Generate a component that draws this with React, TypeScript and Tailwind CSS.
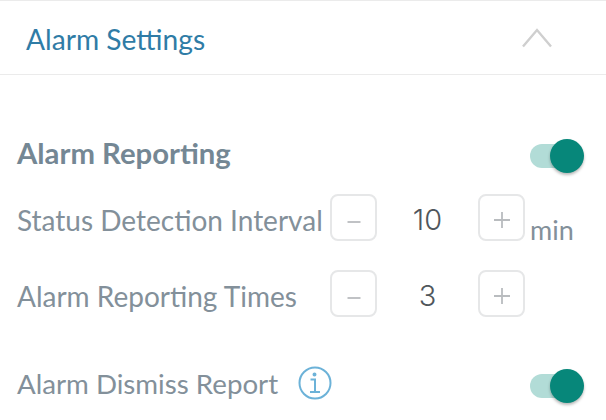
function Toggle() {
  return (
    <div className="relative mr-[8px] h-[24px] w-[50px] rounded-full bg-[#b2dcd7]">
      <div className="absolute -top-[5px] left-[20px] h-[34px] w-[34px] rounded-full bg-[#07877a] shadow-[0_2px_3px_rgba(0,0,0,0.28)]" />
    </div>
  );
}

function StepButton({ kind }: { kind: "minus" | "plus" }) {
  return (
    <div className="flex h-[47px] w-[47px] shrink-0 items-center justify-center rounded-[8px] border-2 border-[#e6e7e8]">
      <svg width="18" height="22" viewBox="0 0 18 22" fill="none" stroke="#b9bcbf" strokeWidth="1.8">
        {kind === "minus" ? <path d="M2.5 15h13" /> : <path d="M1 13h16M9 5v16" />}
      </svg>
    </div>
  );
}

function Stepper({ value }: { value: number }) {
  return (
    <div className="flex items-center">
      <StepButton kind="minus" />
      <div className="mt-[4px] w-[101px] text-center font-['Inter',sans-serif] text-[29px] font-light text-[#50565c]">{value}</div>
      <StepButton kind="plus" />
    </div>
  );
}

export default function App() {
  return (
    <div className="h-[420px] w-[606px] overflow-hidden bg-white font-['Lato',sans-serif]">
      <div className="flex h-[75px] items-center justify-between border-y border-[#ebebeb] pl-[26px] pr-[54px]">
        <span className="mt-[4px] text-[28.2px] text-[#2f7ca6]">Alarm Settings</span>
        <svg width="30" height="20" viewBox="0 0 30 20" fill="none" stroke="#cfcfcf" strokeWidth="2.4">
          <path d="M1 18.5 15 2l14 16.5" />
        </svg>
      </div>
      <div className="pl-[17px] pr-[18px]">
        <div className="mt-[58px] flex h-[46px] items-center justify-between">
          <span className="mb-[6px] text-[29.3px] font-bold text-[#748794]">Alarm Reporting</span>
          <Toggle />
        </div>
        <div className="mt-[15px] flex h-[47px] items-center">
          <span className="mt-[4px] w-[313px] whitespace-nowrap text-[28px] text-[#83909a]">Status Detection Interval</span>
          <Stepper value={10} />
          <span className="ml-[5px] mt-[26px] text-[27px] text-[#83909a]">min</span>
        </div>
        <div className="mt-[29px] flex h-[47px] items-center">
          <span className="mt-[4px] w-[313px] text-[28px] text-[#83909a]">Alarm Reporting Times</span>
          <Stepper value={3} />
        </div>
        <div className="mt-[46px] flex h-[46px] items-center justify-between">
          <div className="flex items-center gap-[20px]">
            <span className="mb-[4px] text-[27.7px] text-[#83909a]">Alarm Dismiss Report</span>
            <svg className="mb-[6px]" width="34" height="34" viewBox="0 0 34 34" fill="none" stroke="#6cb2d8" strokeWidth="2">
              <circle cx="17" cy="17" r="15.5" />
              <path d="M12 26h10M17 26V13.5h-4.5" />
              <circle cx="16.5" cy="8.5" r="1" fill="#6cb2d8" />
            </svg>
          </div>
          <Toggle />
        </div>
      </div>
    </div>
  );
}
